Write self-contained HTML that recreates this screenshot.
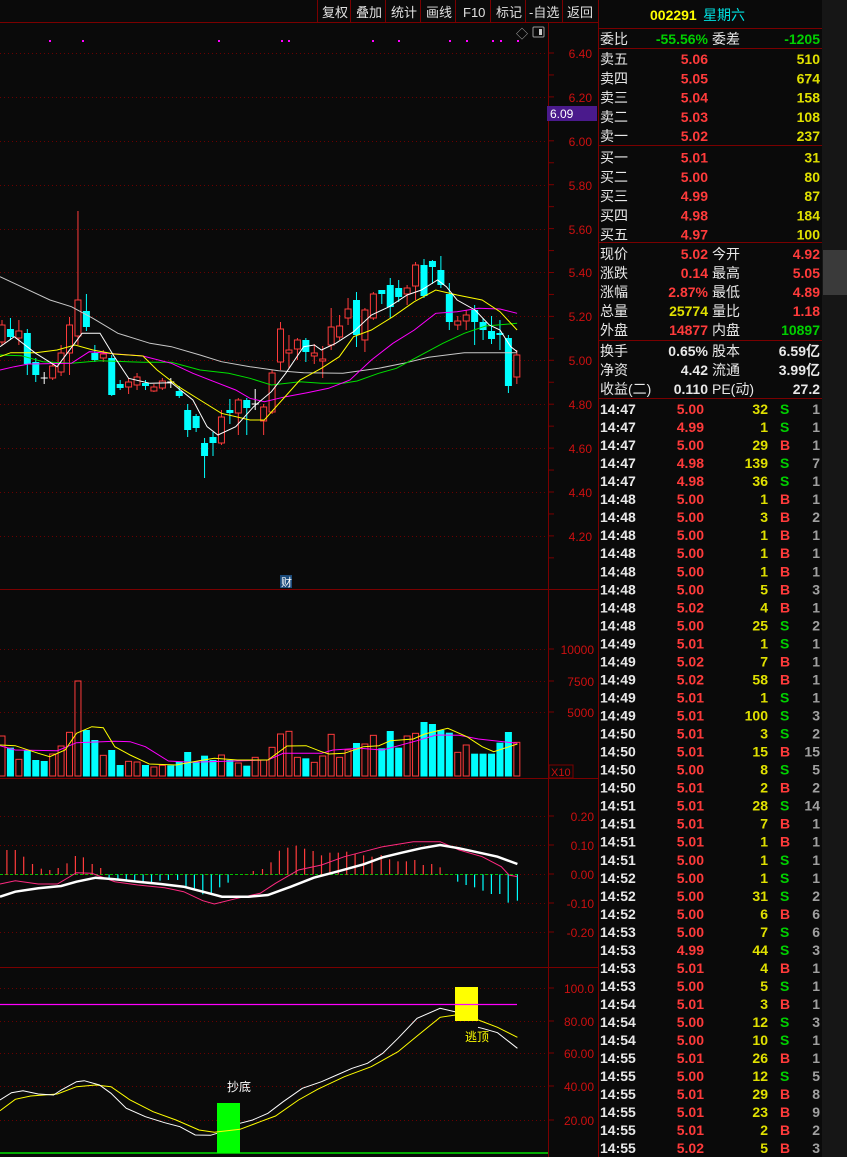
<!DOCTYPE html>
<html><head><meta charset="utf-8"><style>
html,body{margin:0;padding:0;background:#0a0a0a;width:847px;height:1157px;overflow:hidden;}
#c{position:absolute;left:0;top:0;}
.t{font-family:"Liberation Sans","Noto Sans CJK SC",sans-serif;}
</style></head><body>
<svg id="c" width="847" height="1157" xmlns="http://www.w3.org/2000/svg">
<rect width="847" height="1157" fill="#0a0a0a"/>
<rect x="822" y="0" width="25" height="1157" fill="#161616"/>
<rect x="823" y="250" width="24" height="45" fill="#3a3a3a"/>
<g id="g"></g>
<g fill="none" stroke="#7a0000" stroke-width="1">
<line x1="0" y1="22.5" x2="598" y2="22.5"/>
<line x1="317.5" y1="0" x2="317.5" y2="22"/><line x1="350.5" y1="0" x2="350.5" y2="22"/><line x1="385.5" y1="0" x2="385.5" y2="22"/><line x1="420.5" y1="0" x2="420.5" y2="22"/><line x1="455.5" y1="0" x2="455.5" y2="22"/><line x1="490.5" y1="0" x2="490.5" y2="22"/><line x1="525.5" y1="0" x2="525.5" y2="22"/><line x1="562.5" y1="0" x2="562.5" y2="22"/>
<line x1="598.5" y1="0" x2="598.5" y2="1157"/>
<line x1="548.5" y1="22" x2="548.5" y2="1157"/>
<line x1="0" y1="589.5" x2="598" y2="589.5"/>
<line x1="0" y1="778.5" x2="598" y2="778.5"/>
<line x1="0" y1="967.5" x2="598" y2="967.5"/>
<line x1="598" y1="28.5" x2="822" y2="28.5"/>
<line x1="598" y1="48.5" x2="822" y2="48.5"/>
<line x1="598" y1="145.5" x2="822" y2="145.5"/>
<line x1="598" y1="242.5" x2="822" y2="242.5"/>
<line x1="598" y1="340.5" x2="822" y2="340.5"/>
<line x1="598" y1="398.5" x2="822" y2="398.5"/>
</g>
<g class="t" font-size="13" fill="#e0e0e0">
<text x="322" y="17">复权</text><text x="356" y="17">叠加</text><text x="391" y="17">统计</text><text x="426" y="17">画线</text><text x="463" y="17">F10</text><text x="496" y="17">标记</text><text x="529" y="17">-自选</text><text x="567" y="17">返回</text>
</g>
<text x="516" y="38" font-size="12" fill="#aaa" class="t">◇</text>
<rect x="533" y="27" width="11" height="10" fill="none" stroke="#999" rx="1"/><rect x="539" y="29" width="3" height="6" fill="#ccc"/>
<g class="t" font-size="12" fill="#cc1010" text-anchor="end">
<text x="592" y="58">6.40</text><text x="592" y="146">6.00</text><text x="592" y="190">5.80</text><text x="592" y="234">5.60</text><text x="592" y="277">5.40</text><text x="592" y="321">5.20</text><text x="592" y="365">5.00</text><text x="592" y="409">4.80</text><text x="592" y="453">4.60</text><text x="592" y="497">4.40</text><text x="592" y="541">4.20</text><text x="592" y="102">6.20</text>
<text x="594" y="654">10000</text><text x="594" y="686">7500</text><text x="594" y="717">5000</text>
<text x="594" y="821">0.20</text><text x="594" y="850">0.10</text><text x="594" y="879">0.00</text><text x="594" y="908">-0.10</text><text x="594" y="937">-0.20</text>
<text x="594" y="993">100.0</text><text x="594" y="1026">80.00</text><text x="594" y="1058">60.00</text><text x="594" y="1091">40.00</text><text x="594" y="1125">20.00</text>
</g>
<rect x="547" y="106" width="50" height="15" fill="#4a1a8c"/>
<text x="550" y="118" font-size="12" fill="#fff" class="t">6.09</text>
<rect x="549" y="765" width="24" height="13" fill="none" stroke="#7a0000"/>
<text x="551" y="776" font-size="11" fill="#cc1010" class="t">X10</text>
<rect x="280" y="575" width="12" height="13" fill="#1a4a7a"/>
<text x="281" y="586" font-size="11" fill="#fff" class="t">财</text>
<text x="227" y="1091" font-size="12" fill="#fff" class="t">抄底</text>
<text x="465" y="1041" font-size="12" fill="#ff0" class="t">逃顶</text>
<g class="t" font-size="14">
<text x="650" y="20" fill="#ffff00" font-weight="bold">002291</text><text x="703" y="20" fill="#00e0e0">星期六</text>
</g>
<g id="rp" class="t" font-size="14"></g>
</svg>
<script>
var g=document.getElementById('g'),h='';
function L(x1,y1,x2,y2,c,w,d){h+='<line x1="'+x1+'" y1="'+y1+'" x2="'+x2+'" y2="'+y2+'" stroke="'+c+'" stroke-width="'+(w||1)+'"'+(d?' stroke-dasharray="'+d+'"':'')+'/>';}
function P(pts,c,w,sx,sy,oy){var s=pts.map(function(p){return (p[0]/sx).toFixed(1)+','+(p[1]/sy+oy).toFixed(1)}).join(' ');h+='<polyline points="'+s+'" fill="none" stroke="'+c+'" stroke-width="'+(w||1)+'"/>';}
[53,97,141,185,229,272,316,360,404,448,492,536].forEach(function(y){L(0,y+.5,548,y+.5,'#6a0000',1,'1 3');});
for(var y=53;y<560;y+=21.95)L(548,y,554,y,'#7a0000');
[649,681,712,816,845,874,903,932,988,1021,1053,1086,1120].forEach(function(y){L(0,y+.5,548,y+.5,'#6a0000',1,'1 3');L(548,y,554,y,'#7a0000');});
[49,82,218,281,288,372,398,449,466,492,500,517].forEach(function(x){h+='<rect x="'+x+'" y="40" width="2" height="2" fill="#ff00ff"/>';});
var C=[[325,342,320,345,'r'],[329,337,318,340,'c'],[331,338,320,345,'r'],[333,364,329,375,'c'],[362,375,358,382,'c'],[378,379,372,384,'w'],[366,378,362,380,'r'],[353,372,345,376,'r'],[325,353,317,375,'r'],[300,336,211,345,'r'],[311,327,294,331,'c'],[353,360,345,362,'c'],[354,358,350,362,'r'],[358,395,355,396,'c'],[384,388,380,390,'c'],[382,387,378,394,'r'],[377,385,373,390,'r'],[383,386,380,390,'c'],[387,391,384,392,'r'],[381,388,378,390,'r'],[382,383,378,388,'w'],[391,396,386,398,'c'],[410,430,404,437,'c'],[416,428,414,432,'c'],[443,456,438,478,'c'],[437,443,432,456,'c'],[417,443,410,445,'r'],[410,413,399,424,'c'],[400,413,398,435,'r'],[400,408,398,435,'c'],[404,405,389,410,'w'],[407,421,404,435,'r'],[373,412,370,414,'r'],[329,362,322,370,'r'],[350,353,335,368,'r'],[340,349,338,360,'r'],[340,352,338,362,'c'],[353,356,344,364,'r'],[359,361,346,378,'r'],[327,345,308,350,'r'],[326,337,315,340,'r'],[309,318,298,325,'r'],[300,335,292,347,'c'],[310,340,308,352,'r'],[294,318,292,320,'r'],[290,294,290,304,'c'],[285,307,278,318,'c'],[288,297,280,302,'c'],[288,294,285,305,'r'],[265,286,262,300,'r'],[265,296,259,298,'c'],[261,267,260,284,'c'],[270,285,256,288,'c'],[294,322,283,330,'c'],[321,325,316,330,'r'],[315,321,310,330,'r'],[310,322,305,345,'c'],[322,330,318,340,'c'],[331,339,316,344,'c'],[333,335,320,350,'c'],[338,386,335,393,'c'],[355,377,350,384,'r']];
var col={r:'#ff3b3b',c:'#00ffff',w:'#ffffff'};
C.forEach(function(d,i){var x=2+i*8.44,c=col[d[4]];L(x,d[2],x,d[3],c);
 if(d[4]=='r')h+='<rect x="'+(x-3)+'" y="'+d[0]+'" width="6" height="'+(d[1]-d[0])+'" fill="#0a0a0a" stroke="'+c+'"/>';
 else if(d[4]=='c')h+='<rect x="'+(x-3.5)+'" y="'+d[0]+'" width="7" height="'+Math.max(1,d[1]-d[0])+'" fill="'+c+'"/>';
 else L(x-3.5,d[0],x+3.5,d[0],c);});
P([[0,230],[60,260],[140,300],[200,320],[260,355],[330,400],[420,430],[480,440],[560,465],[620,485],[700,500],[780,512],[850,518],[960,520],[1060,505],[1130,490],[1200,472],[1300,458],[1448,458]],'#c8c8c8',1,2.8,3,200);
P([[0,465],[60,467],[120,485],[200,490],[280,482],[400,487],[480,487],[560,510],[640,520],[700,535],[760,555],[840,545],[900,550],[960,550],[1000,543],[1060,520],[1110,505],[1170,470],[1240,430],[1300,400],[1360,378],[1448,370]],'#00e000',1,2.8,3,200);
P([[0,510],[40,500],[80,492],[200,490],[250,455],[300,460],[400,468],[480,490],[540,520],[600,545],[660,570],[700,595],[740,605],[800,590],[860,578],[920,565],[980,540],[1040,480],[1100,430],[1160,390],[1220,340],[1280,335],[1340,325],[1400,327],[1448,340]],'#ff00ff',1,2.8,3,200);
P([[0,470],[30,458],[100,458],[160,450],[210,435],[260,450],[320,462],[400,468],[440,510],[500,560],[560,600],[620,640],[700,660],[740,660],[790,600],[840,540],[900,505],[950,470],[990,410],[1040,390],[1100,350],[1160,305],[1220,270],[1280,285],[1350,300],[1400,335],[1448,390]],'#ffff00',1,2.8,3,200);
P([[0,440],[40,410],[100,460],[160,500],[230,400],[280,400],[320,470],[360,535],[420,550],[480,548],[540,600],[580,680],[610,705],[660,680],[710,620],[760,575],[800,520],[850,440],[880,435],[900,450],[940,430],[990,395],[1040,345],[1090,320],[1140,285],[1180,270],[1225,240],[1250,260],[1280,300],[1330,330],[1370,375],[1400,390],[1430,440],[1448,455]],'#ffffff',1,2.8,3,200);
var V=[[468,'r'],[503,'c'],[538,'r'],[510,'c'],[540,'c'],[543,'c'],[522,'r'],[498,'r'],[457,'r'],[303,'r'],[450,'c'],[480,'c'],[526,'r'],[510,'c'],[555,'c'],[544,'r'],[546,'r'],[555,'c'],[561,'r'],[556,'r'],[556,'c'],[545,'c'],[516,'c'],[545,'c'],[527,'c'],[540,'c'],[525,'r'],[540,'c'],[549,'r'],[557,'c'],[532,'r'],[540,'r'],[502,'r'],[462,'r'],[454,'r'],[532,'r'],[535,'c'],[547,'r'],[528,'r'],[463,'r'],[532,'r'],[510,'r'],[489,'c'],[492,'r'],[466,'r'],[505,'c'],[453,'c'],[503,'c'],[468,'r'],[460,'r'],[426,'c'],[432,'c'],[450,'c'],[458,'c'],[517,'r'],[495,'r'],[521,'c'],[521,'c'],[521,'c'],[488,'c'],[456,'c'],[487,'r']];
V.forEach(function(d,i){var x=2+i*8.44,y=d[0]/3+580;
 if(d[1]=='r')h+='<rect x="'+(x-3)+'" y="'+y+'" width="6" height="'+(776-y)+'" fill="none" stroke="#ff3b3b"/>';
 else h+='<rect x="'+(x-3.5)+'" y="'+y+'" width="7" height="'+(776.5-y)+'" fill="#00ffff"/>';});
P([[0,497],[40,510],[150,512],[200,488],[300,484],[340,485],[380,500],[440,543],[500,547],[700,540],[740,520],[840,520],[870,510],[940,505],[1000,510],[1090,482],[1140,465],[1200,466],[1250,477],[1352,490]],'#ff00ff',1,2.613,3,580);
P([[0,495],[40,497],[100,520],[130,530],[170,510],[200,460],[240,440],[270,443],[300,500],[340,525],[390,552],[460,555],[520,542],[560,535],[620,540],[700,540],[750,498],[800,497],[840,515],[860,522],[900,520],[950,500],[990,497],[1020,482],[1080,477],[1110,462],[1170,445],[1220,470],[1260,500],[1290,515],[1330,500],[1352,492]],'#ffff00',1,2.613,3,580);
L(0,874.5,518,874.5,'#00c000',1,'3 2');
var M=[[18,810],[40,810],[62,830],[85,852],[108,866],[130,870],[152,864],[175,850],[197,828],[218,832],[241,852],[263,864],[285,895],[308,897],[330,905],[352,905],[374,905],[396,907],[418,902],[440,900],[464,900],[486,920],[508,925],[530,943],[552,945],[574,922],[596,908],[662,873],[686,867],[708,847],[730,812],[752,803],[774,797],[796,806],[818,813],[840,826],[862,818],[884,818],[906,815],[928,822],[950,826],[972,830],[996,825],[1018,838],[1040,844],[1062,844],[1084,840],[1106,855],[1128,852],[1150,862],[1196,905],[1218,915],[1240,922],[1262,932],[1284,942],[1306,942],[1328,968],[1352,962]];
M.forEach(function(d){var x=(d[0]/2.613).toFixed(1),y=d[1]/3+580;L(x,874.5,x,y,y<874?'#ff3b3b':'#00ffff',1.2);});
P([[0,912],[40,902],[100,912],[150,912],[200,878],[240,880],[300,905],[360,915],[430,923],[480,935],[530,962],[560,972],[620,955],[680,940],[720,910],[780,870],[840,855],[900,830],[950,815],[1000,800],[1080,785],[1150,785],[1200,810],[1260,830],[1310,860],[1330,885],[1352,890]],'#ff2a80',1,2.613,3,580);
P([[0,950],[40,935],[100,925],[160,918],[200,905],[250,893],[300,898],[360,905],[420,912],[480,920],[540,938],[580,950],[650,950],[700,945],[760,920],[820,893],[880,875],[950,853],[1000,832],[1050,818],[1100,805],[1150,795],[1200,805],[1260,820],[1300,830],[1352,852]],'#ffffff',2.5,2.613,3,580);
L(0,1004.5,517,1004.5,'#ff00ff',1.2);
L(0,1153,548,1153,'#00e000',1.5);
h+='<rect x="217" y="1103" width="23" height="50" fill="#00ff00"/><rect x="455" y="987" width="23" height="34" fill="#ffff00"/>';
L(455,1004.5,478,1004.5,'#ff00ff',1.2);
P([[0,632],[40,598],[80,588],[150,582],[200,560],[250,555],[290,560],[340,600],[400,635],[460,660],[520,690],[560,697],[627,688],[680,665],[720,648],[780,600],[830,568],[900,530],[970,500],[1040,455],[1090,408],[1150,352],[1190,345],[1250,360],[1300,382],[1352,412]],'#ffff00',1,2.613,3,900);
P([[0,600],[30,578],[60,572],[100,582],[140,585],[160,570],[200,545],[220,542],[260,555],[290,580],[330,625],[380,650],[430,668],[470,680],[510,705],[550,706],[567,700]],'#ffffff',1,2.613,3,900);
P([[627,670],[660,660],[700,640],[740,605],[790,565],[840,545],[880,525],[920,505],[960,490],[1000,460],[1040,415],[1090,355],[1150,325],[1189,335]],'#ffffff',1,2.613,3,900);
P([[1249,382],[1260,385],[1300,398],[1330,425],[1352,445]],'#ffffff',1,2.613,3,900);
g.innerHTML=h;
</script>
<script>
var r='',W='#e8e8e8',R='#ff3b3b',Y='#e0e000',G='#00d000',GR='#a0a0a0';
function T(x,y,s,c,a,b){r+='<text x="'+x+'" y="'+y+'" fill="'+c+'"'+(a?' text-anchor="end"':'')+(b?' font-weight="bold"':'')+'>'+s+'</text>';}
function row(y,l1,v1,c1,l2,v2,c2){T(600,y,l1,W);T(708,y,v1,c1,1,1);if(l2)T(712,y,l2,W);T(820,y,v2,c2,1,1);}
row(44,'委比','-55.56%',G,'委差','-1205',G);
var s=[['卖五','5.06','510'],['卖四','5.05','674'],['卖三','5.04','158'],['卖二','5.03','108'],['卖一','5.02','237'],['买一','5.01','31'],['买二','5.00','80'],['买三','4.99','87'],['买四','4.98','184'],['买五','4.97','100']];
s.forEach(function(d,i){var y=64+i*19.3+(i>=5?2:0);row(y,d[0],d[1],R,'',d[2],Y);});
row(259,'现价','5.02',R,'今开','4.92',R);row(278,'涨跌','0.14',R,'最高','5.05',R);row(297,'涨幅','2.87%',R,'最低','4.89',R);row(316,'总量','25774',Y,'量比','1.18',R);row(335,'外盘','14877',R,'内盘','10897',G);
row(356,'换手','0.65%',W,'股本','6.59亿',W);row(375,'净资','4.42',W,'流通','3.99亿',W);row(394,'收益(二)','0.110',W,'PE(动)','27.2',W);
var k="14:47 5.00 32 S 1|14:47 4.99 1 S 1|14:47 5.00 29 B 1|14:47 4.98 139 S 7|14:47 4.98 36 S 1|14:48 5.00 1 B 1|14:48 5.00 3 B 2|14:48 5.00 1 B 1|14:48 5.00 1 B 1|14:48 5.00 1 B 1|14:48 5.00 5 B 3|14:48 5.02 4 B 1|14:48 5.00 25 S 2|14:49 5.01 1 S 1|14:49 5.02 7 B 1|14:49 5.02 58 B 1|14:49 5.01 1 S 1|14:49 5.01 100 S 3|14:50 5.01 3 S 2|14:50 5.01 15 B 15|14:50 5.00 8 S 5|14:50 5.01 2 B 2|14:51 5.01 28 S 14|14:51 5.01 7 B 1|14:51 5.01 1 B 1|14:51 5.00 1 S 1|14:52 5.00 1 S 1|14:52 5.00 31 S 2|14:52 5.00 6 B 6|14:53 5.00 7 S 6|14:53 4.99 44 S 3|14:53 5.01 4 B 1|14:53 5.00 5 S 1|14:54 5.01 3 B 1|14:54 5.00 12 S 3|14:54 5.00 10 S 1|14:55 5.01 26 B 1|14:55 5.00 12 S 5|14:55 5.01 29 B 8|14:55 5.01 23 B 9|14:55 5.01 2 B 2|14:55 5.02 5 B 3".split('|');
k.forEach(function(l,i){var d=l.split(' '),y=414+i*18.03;T(600,y,d[0],W,0,1);T(704,y,d[1],R,1,1);T(768,y,d[2],Y,1,1);T(780,y,d[3],d[3]=='B'?R:G,0,1);T(820,y,d[4],GR,1,1);});
document.getElementById('rp').innerHTML=r;
</script>
</body></html>
